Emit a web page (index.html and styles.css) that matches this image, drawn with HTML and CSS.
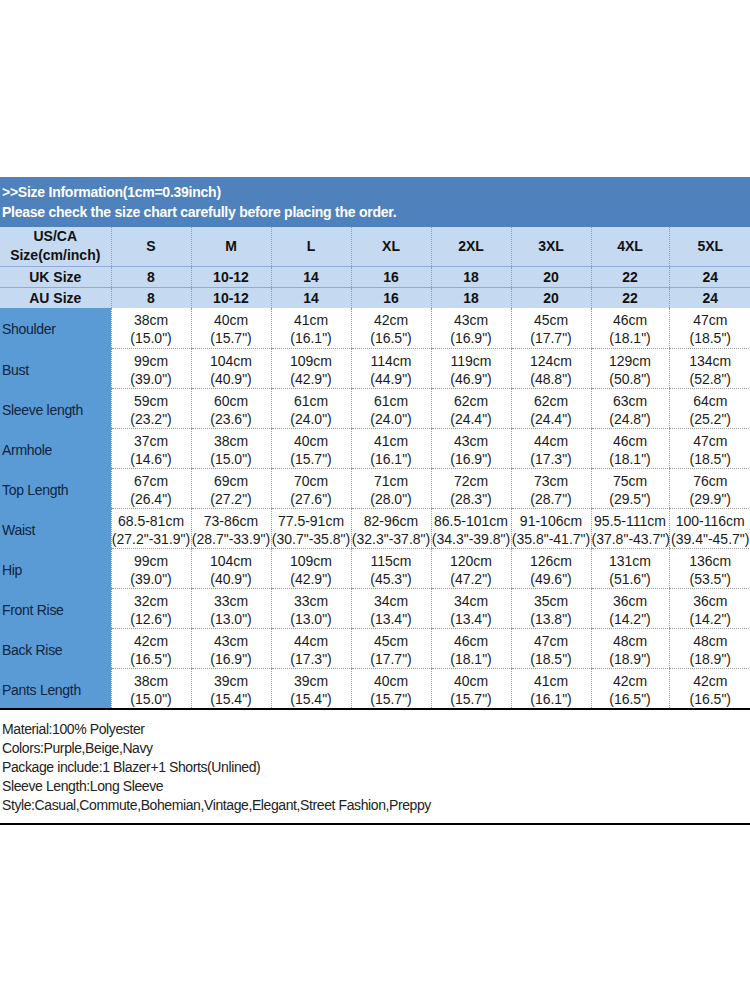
FILE: index.html
```html
<!DOCTYPE html>
<html>
<head>
<meta charset="utf-8">
<link rel="stylesheet" href="styles.css">
</head>
<body>
<div class="page">
  <div class="banner">
    <div>&gt;&gt;Size Information(1cm=0.39inch)</div>
    <div>Please check the size chart carefully before placing the order.</div>
  </div>
  <table class="chart">
    <colgroup>
      <col class="c0"><col class="c1"><col class="c1"><col class="c1"><col class="c1"><col class="c1"><col class="c1"><col class="c7"><col class="c8">
    </colgroup>
    <tr class="hrow h1">
      <th>US/CA<br>Size(cm/inch)</th><th>S</th><th>M</th><th>L</th><th>XL</th><th>2XL</th><th>3XL</th><th>4XL</th><th>5XL</th>
    </tr>
    <tr class="hrow h2">
      <th>UK Size</th><th>8</th><th>10-12</th><th>14</th><th>16</th><th>18</th><th>20</th><th>22</th><th>24</th>
    </tr>
    <tr class="hrow h3">
      <th>AU Size</th><th>8</th><th>10-12</th><th>14</th><th>16</th><th>18</th><th>20</th><th>22</th><th>24</th>
    </tr>
    <tr class="drow"><td class="lbl">Shoulder</td><td>38cm<br>(15.0")</td><td>40cm<br>(15.7")</td><td>41cm<br>(16.1")</td><td>42cm<br>(16.5")</td><td>43cm<br>(16.9")</td><td>45cm<br>(17.7")</td><td>46cm<br>(18.1")</td><td>47cm<br>(18.5")</td></tr>
    <tr class="drow"><td class="lbl">Bust</td><td>99cm<br>(39.0")</td><td>104cm<br>(40.9")</td><td>109cm<br>(42.9")</td><td>114cm<br>(44.9")</td><td>119cm<br>(46.9")</td><td>124cm<br>(48.8")</td><td>129cm<br>(50.8")</td><td>134cm<br>(52.8")</td></tr>
    <tr class="drow"><td class="lbl">Sleeve length</td><td>59cm<br>(23.2")</td><td>60cm<br>(23.6")</td><td>61cm<br>(24.0")</td><td>61cm<br>(24.0")</td><td>62cm<br>(24.4")</td><td>62cm<br>(24.4")</td><td>63cm<br>(24.8")</td><td>64cm<br>(25.2")</td></tr>
    <tr class="drow"><td class="lbl">Armhole</td><td>37cm<br>(14.6")</td><td>38cm<br>(15.0")</td><td>40cm<br>(15.7")</td><td>41cm<br>(16.1")</td><td>43cm<br>(16.9")</td><td>44cm<br>(17.3")</td><td>46cm<br>(18.1")</td><td>47cm<br>(18.5")</td></tr>
    <tr class="drow"><td class="lbl">Top Length</td><td>67cm<br>(26.4")</td><td>69cm<br>(27.2")</td><td>70cm<br>(27.6")</td><td>71cm<br>(28.0")</td><td>72cm<br>(28.3")</td><td>73cm<br>(28.7")</td><td>75cm<br>(29.5")</td><td>76cm<br>(29.9")</td></tr>
    <tr class="drow"><td class="lbl">Waist</td><td>68.5-81cm<br>(27.2"-31.9")</td><td>73-86cm<br>(28.7"-33.9")</td><td>77.5-91cm<br>(30.7"-35.8")</td><td>82-96cm<br>(32.3"-37.8")</td><td>86.5-101cm<br>(34.3"-39.8")</td><td>91-106cm<br>(35.8"-41.7")</td><td>95.5-111cm<br>(37.8"-43.7")</td><td>100-116cm<br>(39.4"-45.7")</td></tr>
    <tr class="drow"><td class="lbl">Hip</td><td>99cm<br>(39.0")</td><td>104cm<br>(40.9")</td><td>109cm<br>(42.9")</td><td>115cm<br>(45.3")</td><td>120cm<br>(47.2")</td><td>126cm<br>(49.6")</td><td>131cm<br>(51.6")</td><td>136cm<br>(53.5")</td></tr>
    <tr class="drow"><td class="lbl">Front Rise</td><td>32cm<br>(12.6")</td><td>33cm<br>(13.0")</td><td>33cm<br>(13.0")</td><td>34cm<br>(13.4")</td><td>34cm<br>(13.4")</td><td>35cm<br>(13.8")</td><td>36cm<br>(14.2")</td><td>36cm<br>(14.2")</td></tr>
    <tr class="drow"><td class="lbl">Back Rise</td><td>42cm<br>(16.5")</td><td>43cm<br>(16.9")</td><td>44cm<br>(17.3")</td><td>45cm<br>(17.7")</td><td>46cm<br>(18.1")</td><td>47cm<br>(18.5")</td><td>48cm<br>(18.9")</td><td>48cm<br>(18.9")</td></tr>
    <tr class="drow last"><td class="lbl">Pants Length</td><td>38cm<br>(15.0")</td><td>39cm<br>(15.4")</td><td>39cm<br>(15.4")</td><td>40cm<br>(15.7")</td><td>40cm<br>(15.7")</td><td>41cm<br>(16.1")</td><td>42cm<br>(16.5")</td><td>42cm<br>(16.5")</td></tr>
  </table>
  <div class="info">
    <div>Material:100% Polyester</div>
    <div>Colors:Purple,Beige,Navy</div>
    <div>Package include:1 Blazer+1 Shorts(Unlined)</div>
    <div>Sleeve Length:Long Sleeve</div>
    <div>Style:Casual,Commute,Bohemian,Vintage,Elegant,Street Fashion,Preppy</div>
  </div>
</div>
</body>
</html>
```

FILE: styles.css
```css
html, body {
  margin: 0;
  padding: 0;
  background: #ffffff;
}
.page {
  padding-top: 177px;
  width: 750px;
  font-family: "Liberation Sans", Arial, sans-serif;
  font-size: 14px;
  color: #1a1a1a;
}
.banner {
  background: #4f81bd;
  color: #ffffff;
  font-weight: bold;
  height: 50px;
  box-sizing: border-box;
  padding: 5px 0 0 2px;
  line-height: 20px;
  font-size: 14px;
  letter-spacing: -0.25px;
}
.chart {
  width: 750px;
  border-collapse: collapse;
  table-layout: fixed;
  border-bottom: 2px solid #000000;
}
.c0 { width: 111px; }
.c1 { width: 80px; }
.c7 { width: 78px; }
.c8 { width: 82px; }
.chart th {
  background: #c5d9f1;
  font-weight: bold;
  color: #111111;
  padding: 0;
  line-height: 20px;
  border-left: 1px dotted #8c9bb0;
  border-bottom: 1px solid #8eaadb;
  text-align: center;
}
.chart th:first-child { border-left: none; }
.h1 { height: 39px; }
.h2 { height: 20px; }
.h3 { height: 21px; }
.h1 th { line-height: 19px; }
.h3 th { border-bottom: none; }
.drow { height: 40px; }
.chart td {
  padding: 3px 0 0 0;
  text-align: center;
  line-height: 18px;
  color: #1a1a1a;
  border-left: 1px dotted #9a9a9a;
  border-bottom: 1px dotted #9a9a9a;
  vertical-align: middle;
}
.chart td.lbl {
  background: #5b9bd5;
  text-align: left;
  padding-left: 2px;
  border-left: none;
  border-bottom: 1px solid #5b9bd5;
  color: #10243f;
  letter-spacing: -0.3px;
}
.drow.last td { border-bottom: none; }
.info {
  padding: 10px 0 8px 2px;
  line-height: 19px;
  color: #222222;
  letter-spacing: -0.4px;
  border-bottom: 2px solid #000000;
}
```
